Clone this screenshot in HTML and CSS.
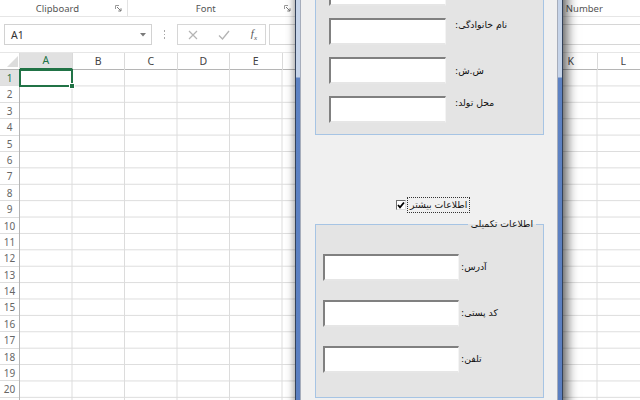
FILE: index.html
```html
<!DOCTYPE html>
<html lang="en">
<head>
<meta charset="utf-8">
<title>Excel UserForm</title>
<link rel="stylesheet" href="styles.css">
</head>
<body>
<div class="excel">
  <div class="ribbon">
    <div class="group g-clip"><span class="glabel">Clipboard</span><svg class="launcher" viewBox="0 0 7 7" width="7" height="7"><path d="M0.5 4V0.5H4" fill="none" stroke="#9a9a9a" stroke-width="1"/><path d="M2 2L6 6M6 3.3V6H3.3" fill="none" stroke="#7a7a7a" stroke-width="1"/></svg></div>
    <div class="group g-font"><span class="glabel">Font</span><svg class="launcher" viewBox="0 0 7 7" width="7" height="7"><path d="M0.5 4V0.5H4" fill="none" stroke="#9a9a9a" stroke-width="1"/><path d="M2 2L6 6M6 3.3V6H3.3" fill="none" stroke="#7a7a7a" stroke-width="1"/></svg></div>
    <div class="group g-align"></div>
    <div class="group g-num"><span class="glabel">Number</span></div>
  </div>
  <div class="fbar">
    <div class="namebox"><span>A1</span><svg class="nbarrow" viewBox="0 0 6 4" width="6" height="4"><path d="M0 0H6L3 3.5Z" fill="#7a7a7a"/></svg></div>
    <div class="dots"><i></i><i></i><i></i></div>
    <div class="fbtns">
      <svg viewBox="0 0 10 10" width="10" height="10"><path d="M1 1L9 9M9 1L1 9" stroke="#b4b4b4" stroke-width="1.2"/></svg>
      <svg viewBox="0 0 12 10" width="12" height="10"><path d="M1 5.5L4.5 9L11 1" fill="none" stroke="#b4b4b4" stroke-width="1.3"/></svg>
      <span class="fx">f<sub>x</sub></span>
    </div>
    <div class="finput"></div>
  </div>
  <div class="sheet">
    <div class="colhdr">
      <div class="corner"><i></i></div>
      <div class="ch sel-h">A</div><div class="ch">B</div><div class="ch">C</div><div class="ch">D</div><div class="ch">E</div><div class="ch">F</div><div class="ch">G</div><div class="ch">H</div><div class="ch">I</div><div class="ch">J</div><div class="ch">K</div><div class="ch">L</div>
    </div>
    <div class="gridbody">
      <div class="rowhdrs">
        <div class="rh sel-r">1</div><div class="rh">2</div><div class="rh">3</div><div class="rh">4</div><div class="rh">5</div><div class="rh">6</div><div class="rh">7</div><div class="rh">8</div><div class="rh">9</div><div class="rh">10</div><div class="rh">11</div><div class="rh">12</div><div class="rh">13</div><div class="rh">14</div><div class="rh">15</div><div class="rh">16</div><div class="rh">17</div><div class="rh">18</div><div class="rh">19</div><div class="rh">20</div><div class="rh"></div>
      </div>
      <div class="cells"><div class="selcell"><i class="handle"></i></div></div>
    </div>
  </div>
</div>

<div class="dialog">
  <div class="form">
    <div class="frame1">
      <div class="frow"><div class="tb tb1"></div></div>
      <div class="frow"><div class="tb tb1"></div><label class="lbl la" dir="rtl">نام خانوادگی:</label></div>
      <div class="frow"><div class="tb tb1"></div><label class="lbl lb" dir="rtl">ش.ش:</label></div>
      <div class="frow"><div class="tb tb1"></div><label class="lbl la" dir="rtl">محل تولد:</label></div>
    </div>
    <div class="cbrow">
      <span class="cb"><svg viewBox="0 0 8 8" width="8" height="8"><path d="M1 4L3 6.3L7 1.5" fill="none" stroke="#000" stroke-width="1.8"/></svg></span>
      <span class="cblbl" dir="rtl">اطلاعات بیشتر</span>
    </div>
    <fieldset class="frame2" dir="rtl">
      <legend>اطلاعات تکمیلی</legend>
      <div class="f2body" dir="ltr">
        <div class="frow2"><div class="tb tb2"></div><label class="lbl lc" dir="rtl">آدرس:</label></div>
        <div class="frow2"><div class="tb tb2"></div><label class="lbl lc" dir="rtl">کد پستی:</label></div>
        <div class="frow2"><div class="tb tb2"></div><label class="lbl lc" dir="rtl">تلفن:</label></div>
      </div>
    </fieldset>
  </div>
</div>
</body>
</html>
```
FILE: styles.css
```css
* { box-sizing: border-box; margin: 0; padding: 0; }
html, body { width: 640px; height: 400px; overflow: hidden; background: #fff; }
body { position: relative; font-family: "Noto Sans", "Open Sans", sans-serif; color: #444; }

/* ---------- ribbon ---------- */
.ribbon { display: flex; height: 17px; border-bottom: 1px solid #e6e6e6; }
.group { display: flex; align-items: center; height: 16px; border-right: 1px solid #e3e3e3; font-size: 9.5px; color: #555; }
.glabel { flex: 1; text-align: center; }
.launcher { margin: 0 5px 0 0; }
.g-clip { width: 129px; }
.g-font { width: 170px; }
.g-align { width: 246px; }
.g-num { width: 100px; border-right: 0; padding-right: 12px; }

/* ---------- formula bar ---------- */
.fbar { display: flex; align-items: center; height: 35px; padding: 0 0 0 4px; }
.namebox { display: flex; align-items: center; justify-content: space-between; width: 148px; height: 21px; border: 1px solid #d2d2d2; padding: 0 5px 0 6px; font-size: 10.5px; color: #333; }
.dots { display: flex; flex-direction: column; gap: 2px; width: 25px; align-items: center; }
.dots i { width: 1.5px; height: 1.5px; background: #a8a8a8; }
.fbtns { display: flex; align-items: center; justify-content: space-between; width: 89px; height: 21px; border: 1px solid #d6d6d6; padding: 0 8px 0 10px; }
.fx { font-family: "Liberation Serif", serif; font-style: italic; font-size: 11px; color: #555; }
.fx sub { font-size: 7px; }
.finput { flex: 1; height: 21px; margin-left: 3px; border: 1px solid #d6d6d6; border-right: 0; }

/* ---------- sheet ---------- */
.colhdr { display: grid; grid-template-columns: 20px repeat(12, 52.5px); height: 18px; border-top: 1px solid #e6e6e6; border-bottom: 1px solid #b5b5b5; }
.corner { border-right: 1px solid #dadada; }
.corner i { display: block; width: 0; height: 0; margin: 3px 0 0 7px; border-style: solid; border-width: 0 0 11px 11px; border-color: transparent transparent #dcdcdc transparent; }
.ch { border-right: 1px solid #dadada; text-align: center; font-size: 10.5px; line-height: 16px; color: #444; }
.sel-h { background: #e1e1e1; color: #217346; border-bottom: 2px solid #217346; line-height: 15px; }

.gridbody { display: grid; grid-template-columns: 20px 1fr; }
.rowhdrs { border-right: 1px solid #b5b5b5; }
.rh { height: 16.4px; line-height: 16px; border-bottom: 1px solid #dedede; text-align: center; font-size: 10px; color: #666; }
.sel-r { background: #e1e1e1; color: #217346; }
.cells {
  position: relative;
  background-image:
    linear-gradient(to right, transparent 51.5px, #dcdcdc 51.5px),
    linear-gradient(to bottom, transparent 15.4px, #dcdcdc 15.4px);
  background-size: 52.5px 16.4px;
}
.selcell { position: absolute; left: -1px; top: -1px; width: 54px; height: 18.4px; border: 2px solid #217346; }
.handle { position: absolute; right: -4px; bottom: -4px; width: 6px; height: 6px; background: #217346; border: 1px solid #fff; }

/* ---------- dialog ---------- */
.dialog {
  position: absolute; left: 295px; top: -45px; width: 268px; height: 520px;
  border: 1px solid #33425a; padding: 0 4px;
  background: linear-gradient(to bottom, #c6d4e9 0, #c6d4e9 121px, #5d82c3 122px, #5a7ec0 100%);
  box-shadow: 5px 2px 10px rgba(0,0,0,0.55), -2px 0 7px rgba(0,0,0,0.25);
}
.form {
  height: 100%; background: #f0f0f0; padding: 4px 13px 0 15px;
  border-left: 1px solid rgba(30,50,90,0.35); border-right: 1px solid rgba(30,50,90,0.35);
  font-family: "DejaVu Sans", sans-serif; font-size: 9.3px; color: #111;
}
.frame1 { display: flex; flex-direction: column; gap: 12px; margin-left: -1px; border: 1px solid #a6c4e4; background: #e4e4e4; padding: 18px 0 11px 13px; }
.frow, .frow2 { display: flex; align-items: flex-start; }
.tb { height: 27px; background: #fff; border-style: solid; border-width: 2px 1px 2px 2px; border-color: #808080 #f4f4f4 #e6e6e6 #808080; }
.tb1 { width: 117px; }
.lbl { margin-left: 9px; line-height: 11px; }
.la { padding-top: 1px; }
.lb { padding-top: 8px; }

.cbrow { display: flex; align-items: center; margin: 62px 0 0 80px; height: 16px; }
.cb { display: flex; align-items: center; justify-content: center; width: 10px; height: 10px; background: #fff; border-style: solid; border-width: 1px; border-color: #6c6c6c #e0e0e0 #e0e0e0 #6c6c6c; }
.cblbl { margin-left: 1px; padding: 1px 2px 2px; border: 1px dotted #333; line-height: 11px; }

.frame2 { margin: 5px 0 0 -1px; border: 1px solid #a6c4e4; background: #e4e4e4; padding: 0; min-width: 0; }
.frame2 legend { margin-right: 7px; padding: 0 3px; line-height: 12px; }
.f2body { display: flex; flex-direction: column; gap: 19px; padding: 24px 0 24px 7px; }
.tb2 { width: 136px; }
.frow2 .lbl { margin-left: 2px; }
.lc { padding-top: 7px; }
```
